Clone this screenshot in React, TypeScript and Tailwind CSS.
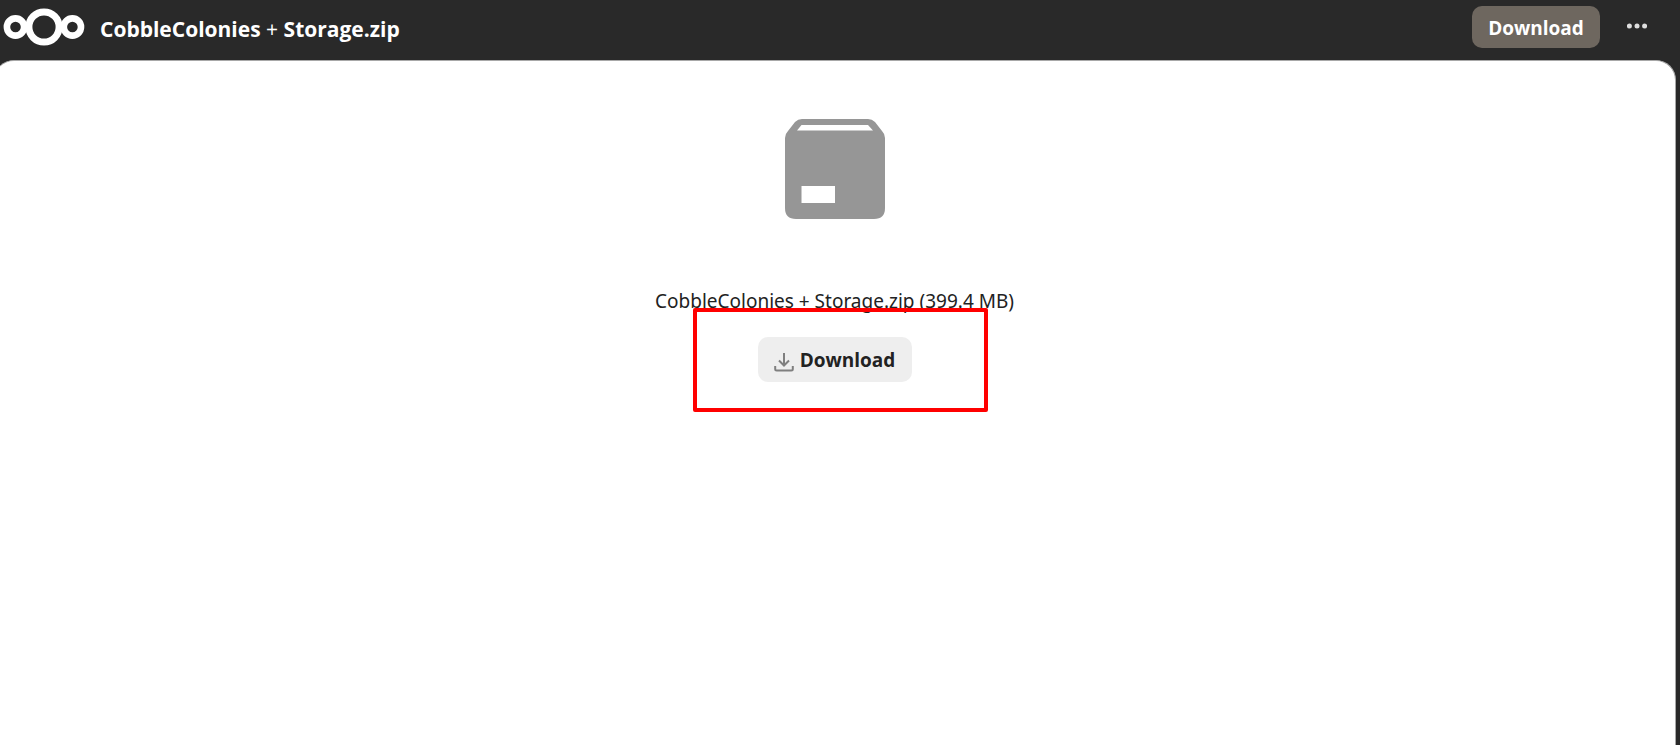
import { useState } from 'react';

const FILE = {
  name: 'CobbleColonies + Storage.zip',
  size: '399.4 MB',
};

function Logo() {
  return (
    <svg viewBox="0 0 88 54" className="w-[88px] h-[54px] shrink-0" fill="none" stroke="#fff" role="img" aria-label="Home">
      <circle cx="15.5" cy="27" r="8.6" strokeWidth="6.6" />
      <circle cx="44" cy="27" r="15.1" strokeWidth="7" />
      <circle cx="72.4" cy="27" r="8.6" strokeWidth="6.6" />
    </svg>
  );
}

function PackageIcon() {
  return (
    <svg viewBox="0 0 100 100" className="w-[100px] h-[100px]" aria-hidden="true">
      <path
        fill="#969696"
        fillRule="evenodd"
        d="M17 0h66q4 0 7 3l7 9q3 3 3 7v70q0 11-11 11H11Q0 100 0 89V19q0-4 3-7l7-9q3-3 7-3ZM16.500 6l-4.500 5.500h76l-5-5.500ZM16.500 67v17h33.500V67Z"
      />
    </svg>
  );
}

function TrayIcon() {
  return (
    <svg viewBox="0 0 20 20" className="w-5 h-5 mt-1" fill="none" stroke="#7f7f7f" strokeWidth="2" aria-hidden="true">
      <path d="M10 1v12M5 8.500l5 5 5-5M1.200 14v3q0 1.500 1.500 1.500h14.600q1.500 0 1.500-1.500v-3" />
    </svg>
  );
}

function Header({ onDownload }: { onDownload: () => void }) {
  return (
    <header className="flex items-start h-[60px]">
      <a href="#" className="shrink-0">
        <Logo />
      </a>
      <h1 className="flex-1 min-w-0 truncate pl-3 pt-[15px] text-[21px] leading-7 font-bold text-white">
        CobbleColonies <span className="font-normal">+</span> Storage.zip
      </h1>
      <button
        type="button"
        onClick={onDownload}
        className="mt-1.5 w-32 h-[42px] pt-0.5 rounded-[10px] bg-[#6e675f] text-[19px] leading-7 font-bold text-white shrink-0"
      >
        Download
      </button>
      <button type="button" aria-label="More actions" className="ml-4 mr-[22px] w-[42px] h-[52px] flex items-center justify-center shrink-0">
        <svg viewBox="0 0 20 6" className="w-5 h-1.5" fill="#dedede">
          <circle cx="2.400" cy="3" r="2.500" />
          <circle cx="10" cy="3" r="2.500" />
          <circle cx="17.600" cy="3" r="2.500" />
        </svg>
      </button>
    </header>
  );
}

export default function App() {
  const [, setDownloads] = useState(0);
  const handleDownload = () => setDownloads((n) => n + 1);

  return (
    <div className="min-h-screen flex flex-col overflow-hidden bg-[#292929] font-['Open_Sans','Noto_Sans',sans-serif]">
      <Header onDownload={handleDownload} />

      <main className="flex-1 -ml-1.5 mr-1 flex flex-col items-center rounded-t-[20px] border-t border-r border-[#a8a8a8] bg-white pt-[58px]">
        <PackageIcon />
        <p className="mt-[68px] font-['Noto_Sans',sans-serif] text-[19px] leading-7 text-[#222]">
          {FILE.name} ({FILE.size})
        </p>

        <div className="relative mt-[22px]">
          <button
            type="button"
            onClick={handleDownload}
            className="flex items-center justify-center gap-1.5 w-[154px] h-[45px] rounded-[10px] bg-[#eee] text-[19px] leading-7 font-bold text-[#222]"
          >
            <TrayIcon />
            Download
          </button>
          {/* highlight drawn over the page around the button */}
          <div className="pointer-events-none absolute -left-[65px] -top-[29px] w-[295px] h-[104px] rounded-[2px] border-4 border-[#f00]" />
        </div>
      </main>
    </div>
  );
}
